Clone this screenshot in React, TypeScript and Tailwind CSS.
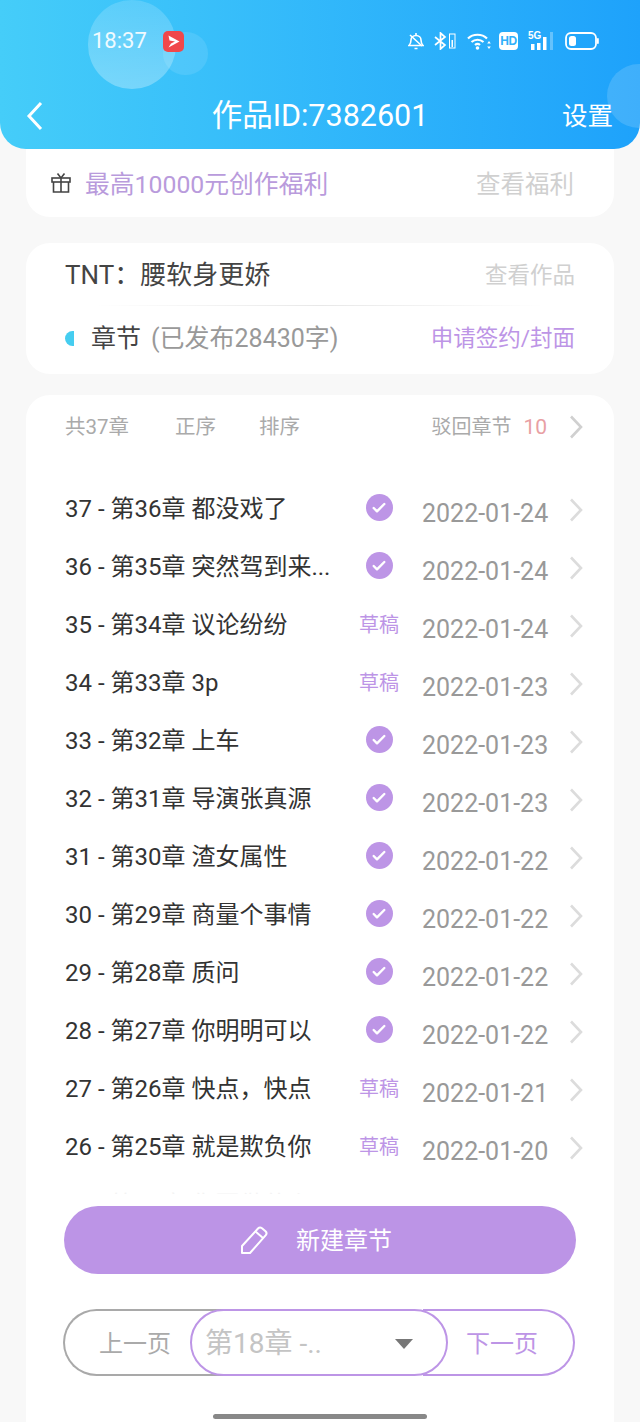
import React from 'react';
import { Check } from 'lucide-react';

const font = 'font-["Roboto","Noto_Sans_CJK_SC",sans-serif]';

type Chapter = { title: string; status: 'ok' | 'draft' | 'none'; date: string };

const chapters: Chapter[] = [
  { title: '37 - 第36章 都没戏了', status: 'ok', date: '2022-01-24' },
  { title: '36 - 第35章 突然驾到来...', status: 'ok', date: '2022-01-24' },
  { title: '35 - 第34章 议论纷纷', status: 'draft', date: '2022-01-24' },
  { title: '34 - 第33章 3p', status: 'draft', date: '2022-01-23' },
  { title: '33 - 第32章 上车', status: 'ok', date: '2022-01-23' },
  { title: '32 - 第31章 导演张真源', status: 'ok', date: '2022-01-23' },
  { title: '31 - 第30章 渣女属性', status: 'ok', date: '2022-01-22' },
  { title: '30 - 第29章 商量个事情', status: 'ok', date: '2022-01-22' },
  { title: '29 - 第28章 质问', status: 'ok', date: '2022-01-22' },
  { title: '28 - 第27章 你明明可以', status: 'ok', date: '2022-01-22' },
  { title: '27 - 第26章 快点，快点', status: 'draft', date: '2022-01-21' },
  { title: '26 - 第25章 就是欺负你', status: 'draft', date: '2022-01-20' },
];

const Chevron = ({ className }: { className?: string }) => (
  <svg width="14" height="24" viewBox="0 0 14 24" fill="none" stroke="currentColor" strokeWidth="2.600" className={className}>
    <path d="M2 1.500L12 12 2 22.500" />
  </svg>
);

const StatusIcons = () => (
  <div className="flex items-center">
    {/* muted bell */}
    <svg width="16" height="18" viewBox="0 0 16 18" fill="none" stroke="white" strokeWidth="1.600" className="mr-[10px]">
      <path d="M1 13.500c1.500-1.500 2-3 2-5.500s2-4.500 5-4.500 5 2 5 4.500 .5 4 2 5.500z" />
      <path d="M6.500 16.500h3M8 1v2M2 3l12 11" />
    </svg>
    {/* bluetooth + battery */}
    <svg width="22" height="18" viewBox="0 0 22 18" fill="none" stroke="white" strokeWidth="1.700" className="mr-[11px]">
      <path d="M1 5l10 8-4.500 4V1L11 5 1 13" />
      <rect x="15.500" y="2" width="5.500" height="14" strokeWidth="1" />
      <rect x="17.500" y="8" width="1.500" height="7" fill="white" stroke="none" />
    </svg>
    {/* wifi */}
    <svg width="24" height="18" viewBox="0 0 24 18" fill="none" stroke="white" strokeWidth="2.200" className="mr-[8px]">
      <path d="M1 6.500C6 1.500 15 1.500 20 6.500M4.500 10c3.500-3 8.500-3 12 0M8 13c1.500-1.300 3.500-1.300 5 0" />
      <circle cx="10.500" cy="16" r="1.800" fill="white" stroke="none" />
      <path d="M22 9l1.800 2.500h-3.600zM22 17l1.800-2.500h-3.600z" fill="white" stroke="none" />
    </svg>
    {/* HD */}
    <div className="w-[19px] h-[18px] mr-[10px] bg-white rounded-[4px] flex items-center justify-center text-[#2fb0fa] text-[12px] font-bold leading-none tracking-[-0.5px] font-['Liberation_Sans',sans-serif]">
      HD
    </div>
    {/* 5G signal */}
    <div className="relative w-[26px] h-[18px] mr-[11px]">
      <span className="absolute left-0 top-[-2px] text-white text-[10px] font-bold leading-[11px] font-['Liberation_Sans',sans-serif]">5G</span>
      <svg width="26" height="18" viewBox="0 0 26 18" fill="white" className="absolute left-0 top-0">
        <rect x="3" y="12" width="3.500" height="6" />
        <rect x="9" y="11" width="3.500" height="7" />
        <rect x="15" y="5" width="3.500" height="13" />
        <rect x="22" y="0" width="3" height="18" opacity="0.3" />
      </svg>
    </div>
    {/* battery */}
    <svg width="34" height="18" viewBox="0 0 34 18" fill="none">
      <rect x="1" y="1" width="30" height="16" rx="5" stroke="white" strokeWidth="1.800" />
      <rect x="4" y="4" width="7" height="10" rx="2.500" fill="white" />
      <rect x="32" y="6" width="1.800" height="6" rx="0.900" fill="white" />
    </svg>
  </div>
);

const Header = () => (
  <div className="relative z-10 h-[149px] overflow-hidden rounded-b-[26px] bg-gradient-to-r from-[#45cdf9] to-[#1ea2fb] text-white">
    {/* soft bubbles behind the status bar */}
    <div className="absolute left-[88px] top-0 w-[88px] h-[89px] rounded-full bg-gradient-to-b from-white/15 to-white/30" />
    <div className="absolute left-[163px] top-[32px] w-[45px] h-[43px] rounded-full bg-white/10" />
    <div className="absolute left-[607px] top-[64px] w-[64px] h-[64px] rounded-full bg-white/15" />

    <div className="relative h-[82px] flex items-center pl-[92px] pr-[41px]">
      <span className="text-[22px] leading-none mr-[16px] text-white/90">18:37</span>
      <div className="w-[21px] h-[21px] rounded-[5px] bg-[#f0484b] flex items-center justify-center">
        <svg width="13" height="13" viewBox="0 0 13 13" fill="white">
          <path d="M1.500 0.500L12.500 6.500 1.500 12.500 4 8.500 8 6.500 2.500 5.500z" />
        </svg>
      </div>
      <div className="flex-1" />
      <StatusIcons />
    </div>

    <div className="relative h-[67px] flex items-center justify-between pl-[26px] pr-[27px]">
      <svg width="17" height="30" viewBox="0 0 17 30" fill="none" stroke="white" strokeWidth="3">
        <path d="M15 2L3 15l12 13" />
      </svg>
      <span className="absolute left-0 right-0 top-0 text-center text-[30.500px] leading-[67px]">作品ID:7382601</span>
      <span className="text-[25.500px] leading-[67px] mt-[1px]">设置</span>
    </div>
  </div>
);

const ChapterRow = ({ chapter }: { chapter: Chapter }) => (
  <div className="h-[58px] flex items-center">
    <span className="w-[275px] shrink-0 text-[24px] leading-none text-[#333333] whitespace-nowrap">{chapter.title}</span>
    <div className="w-[78px] shrink-0 flex justify-center">
      {chapter.status === 'ok' && (
        <div className="w-[27px] h-[27px] -mt-[3px] rounded-full bg-[#bd95e6] flex items-center justify-center">
          <Check size={16} strokeWidth={3.600} className="text-white" />
        </div>
      )}
      {chapter.status === 'draft' && (
        <span className="text-[20px] leading-none text-[#bd95e6] whitespace-nowrap">草稿</span>
      )}
    </div>
    <span className="w-[127px] shrink-0 ml-[4px] mt-[8px] text-[25px] leading-none text-[#999999] whitespace-nowrap">{chapter.date}</span>
    <Chevron className="ml-[20px] mt-[2px] text-[#dcdcdc] shrink-0" />
  </div>
);

export default function App() {
  return (
    <div className={`relative h-[1422px] w-[640px] overflow-hidden bg-[#f8f8f8] ${font}`}>
      <Header />

      <div className="px-[26px]">
        {/* benefits banner */}
        <div className="h-[68px] rounded-b-[24px] bg-white flex items-center pl-[24px] pr-[40px]">
          <svg width="22" height="22" viewBox="0 0 22 22" fill="none" stroke="#444444" strokeWidth="1.600" className="mr-[13px] -mt-[1px]">
            <rect x="2" y="6" width="18" height="4" />
            <path d="M3.500 10v10h15V10M11 6v14M7.500 1.500L11 6l3.500-4.500" />
          </svg>
          <span className="pt-[4px] text-[24.800px] leading-none text-[#b99bdc]">最高10000元创作福利</span>
          <span className="pt-[4px] ml-auto text-[24.500px] leading-none text-[#d0d0d0]">查看福利</span>
        </div>

        {/* work info */}
        <div className="mt-[26px] h-[131px] rounded-[24px] bg-white px-[39px]">
          <div className="h-[62px] flex items-center justify-between pt-[2px]">
            <span className="text-[26px] leading-none text-[#444444]">TNT：腰软身更娇</span>
            <span className="text-[22.500px] leading-none text-[#d0d0d0]">查看作品</span>
          </div>
          <div className="h-px mx-[30px] bg-gradient-to-r from-white via-[#e8e8e8] to-white" />
          <div className="h-[64px] flex items-center">
            <div className="w-[9px] h-[15px] rounded-l-full bg-[#45cdf0] mr-[17px]" />
            <span className="text-[25px] leading-none text-[#444444]">章节</span>
            <span className="ml-[10px] text-[25px] leading-none text-[#999999]">(已发布28430字)</span>
            <span className="ml-auto text-[22.500px] leading-none text-[#bd95e6]">申请签约/封面</span>
          </div>
        </div>

        {/* chapter list */}
        <div className="mt-[21px] h-[1100px] rounded-[24px] bg-white pl-[39px] pr-[31px]">
          <div className="h-[64px] flex items-center text-[20.500px] leading-none text-[#aaaaaa]">
            <span className="w-[110px]">共37章</span>
            <span className="w-[84px]">正序</span>
            <span>排序</span>
            <span className="ml-auto text-[20px]">驳回章节</span>
            <span className="ml-[12px] text-[21px] text-[#e8a0a4]">10</span>
            <Chevron className="ml-[22px] text-[#d0d0d0]" />
          </div>
          <div className="mt-[21px] h-[714px] overflow-hidden">
            {chapters.map((c) => (
              <ChapterRow key={c.title} chapter={c} />
            ))}
            <div className="h-[58px] opacity-5">
              <ChapterRow chapter={{ title: '25 - 第24章 你要做什么呀', status: 'none', date: '' }} />
            </div>
          </div>

          <button className="mt-[12px] -ml-px w-[512px] h-[68px] pr-[8px] rounded-full bg-[#bc94e6] flex items-center justify-center text-white">
            <svg width="28" height="28" viewBox="0 0 28 28" fill="none" stroke="white" strokeWidth="2" strokeLinejoin="round" className="mr-[28px]">
              <path d="M2 27v-7L18 2.500a3 3 0 0 1 4-.3l3.500 3a3 3 0 0 1 .3 4L10 27z" />
              <path d="M15.500 5.500l7.500 6.500" />
            </svg>
            <span className="pt-[2px] text-[24px] leading-none">新建章节</span>
          </button>

          {/* pager */}
          <div className="mt-[35px] -ml-[2px] flex h-[67px] w-[512px] items-center">
            <div className="w-[160px] h-full rounded-l-full border-2 border-[#a9a9a9] border-r-0 flex items-center pl-[34px] pt-[2px] text-[24px] leading-none text-[#aaaaaa]">
              上一页
            </div>
            <div className="relative z-10 -ml-[33px] w-[258px] h-full rounded-full border-2 border-[#bd95e6] bg-white flex items-center pl-[13px] pr-[33px] pt-[2px]">
              <span className="text-[28px] leading-none text-[#c4c4c4]">第18章 -..</span>
              <div className="ml-auto w-0 h-0 border-x-[9px] border-x-transparent border-t-[10px] border-t-[#777777]" />
            </div>
            <div className="-ml-[25px] flex-1 h-full rounded-r-full border-2 border-[#bd95e6] border-l-0 flex items-center pl-[43px] pt-[2px] text-[24px] leading-none text-[#bd95e6]">
              下一页
            </div>
          </div>
        </div>
      </div>

      {/* system home bar */}
      <div className="absolute left-[213px] top-[1414px] w-[214px] h-[5px] rounded-full bg-[#888888]" />
    </div>
  );
}
